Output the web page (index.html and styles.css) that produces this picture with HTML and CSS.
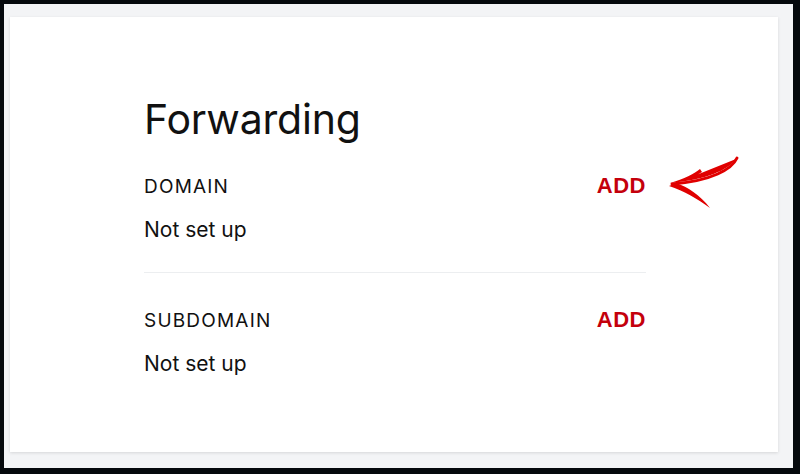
FILE: index.html
```html
<!DOCTYPE html>
<html lang="en">
<head>
    <meta charset="UTF-8">
    <meta name="viewport" content="width=device-width, initial-scale=1.0">
    <title>Forwarding</title>
    <link rel="stylesheet" href="styles.css">
</head>
<body>
    <div class="frame">
        <div class="card">
            <div class="content">
                <h1>Forwarding</h1>

                <div class="row">
                    <div class="row-head">
                        <span class="label">DOMAIN</span>
                        <a href="#" class="add">ADD</a>
                    </div>
                    <div class="value">Not set up</div>

                    <!-- annotation arrow pointing at ADD -->
                    <svg class="arrow" width="80" height="56" viewBox="0 0 80 56">
                        <path d="M70 3 C 62 14, 40 24, 4 27 C 20 22, 28 18, 34 13 L 36 16 C 28 21, 20 24, 10 27 C 22 31, 34 39, 44 52 C 32 43, 18 35, 3 30 Z" fill="#e00000"/>
                        <path d="M71 2 C 66 13, 46 25, 6 28" fill="none" stroke="#e00000" stroke-width="3" stroke-linecap="round"/>
                    </svg>
                </div>

                <div class="row row-last">
                    <div class="row-head">
                        <span class="label">SUBDOMAIN</span>
                        <a href="#" class="add">ADD</a>
                    </div>
                    <div class="value">Not set up</div>
                </div>
            </div>
        </div>
    </div>
</body>
</html>
```

FILE: styles.css
```css
html, body {
    height: 100%;
}
body {
    margin: 0;
    background: #05090d;
    font-family: Inter, "Noto Sans", sans-serif;
    color: #111;
    box-sizing: border-box;
    padding: 4px 7px 6px 4px;
}
.frame {
    height: 100%;
    background: #f3f4f6;
    padding: 13px 15px 16px 6px;
    box-sizing: border-box;
}
.card {
    height: 100%;
    background: #fff;
    box-shadow: 0 1px 3px rgba(0,0,0,0.12);
    padding: 0 0 0 134px;
    box-sizing: border-box;
}
.content {
    width: 502px;
    padding-top: 78px;
}
h1 {
    font-size: 41px;
    font-weight: 400;
    margin: 0 0 31px;
    line-height: 48px;
    letter-spacing: -0.2px;
}
.row {
    position: relative;
    border-bottom: 1px solid #eceef0;
    padding-bottom: 30px;
    margin-bottom: 35px;
}
.row-last {
    border-bottom: none;
}
.row-head {
    display: flex;
    justify-content: space-between;
    align-items: center;
    height: 24px;
}
.label {
    font-size: 19px;
    letter-spacing: 1.2px;
}
.add {
    font-family: "Liberation Sans", Arial, sans-serif;
    font-weight: 700;
    font-size: 22px;
    letter-spacing: 0.5px;
    color: #c4000c;
    text-decoration: none;
}
.value {
    margin-top: 20px;
    font-size: 21px;
    line-height: 24px;
}
.arrow {
    position: absolute;
    left: 522px;
    top: -18px;
}
```
